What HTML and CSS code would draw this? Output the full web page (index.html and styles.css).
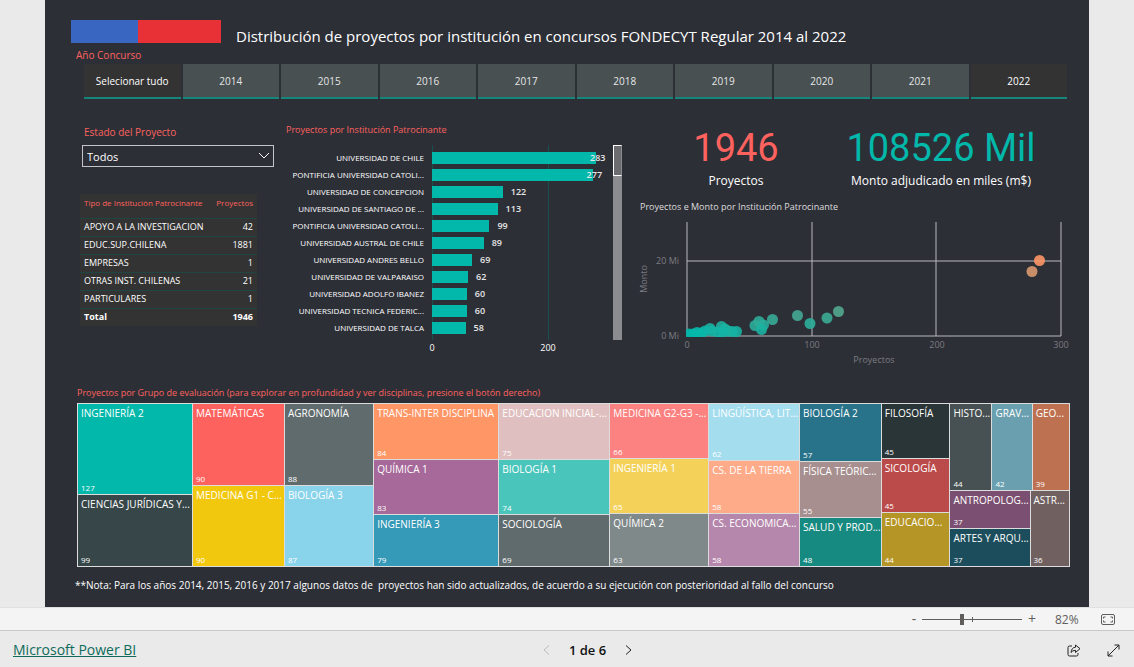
FILE: index.html
```html
<!DOCTYPE html>
<html lang="es">
<head>
<meta charset="utf-8">
<meta name="viewport" content="width=device-width, initial-scale=1">
<title>Proyectos FONDECYT Regular</title>
<link rel="stylesheet" href="styles.css">
</head>
<body>
<main class="viewer">
  <article class="report">
    <header class="report-header">
      <div class="flag"><span class="flag-blue"></span><span class="flag-red"></span></div>
      <h1 class="report-title">Distribución de proyectos por institución en concursos FONDECYT Regular 2014 al 2022</h1>
    </header>

    <h2 class="slicer-title">Año Concurso</h2>
    <nav class="years" aria-label="Año Concurso">
      <button class="year selected">Selecionar tudo</button>
      <button class="year">2014</button>
      <button class="year">2015</button>
      <button class="year">2016</button>
      <button class="year">2017</button>
      <button class="year">2018</button>
      <button class="year">2019</button>
      <button class="year">2020</button>
      <button class="year">2021</button>
      <button class="year selected">2022</button>
    </nav>

    <div class="panels">
      <section class="filters">
        <label class="filter-label" for="estado">Estado del Proyecto</label>
        <div class="select-box">
          <select id="estado" class="select"><option>Todos</option></select>
          <svg class="select-arrow" viewBox="0 0 12 8" aria-hidden="true"><path d="M1 1l5 5 5-5"/></svg>
        </div>
        <table class="types">
          <thead><tr><th>Tipo de Institución Patrocinante</th><th>Proyectos</th></tr></thead>
          <tbody>
            <tr><td>APOYO A LA INVESTIGACION</td><td>42</td></tr>
            <tr><td>EDUC.SUP.CHILENA</td><td>1881</td></tr>
            <tr><td>EMPRESAS</td><td>1</td></tr>
            <tr><td>OTRAS INST. CHILENAS</td><td>21</td></tr>
            <tr><td>PARTICULARES</td><td>1</td></tr>
          </tbody>
          <tfoot><tr><td>Total</td><td>1946</td></tr></tfoot>
        </table>
      </section>

      <section class="institutions">
        <h2 class="chart-title">Proyectos por Institución Patrocinante</h2>
        <div class="bars-frame">
          <div class="bars-main">
            <ul class="bars">
              <li><span class="name">UNIVERSIDAD DE CHILE</span><span class="plot"><i class="bar" style="width:94.3%"></i><b class="inside">283</b></span></li>
              <li><span class="name">PONTIFICIA UNIVERSIDAD CATOLI...</span><span class="plot"><i class="bar" style="width:92.3%"></i><b class="inside">277</b></span></li>
              <li><span class="name">UNIVERSIDAD DE CONCEPCION</span><span class="plot"><i class="bar" style="width:40.7%"></i><b>122</b></span></li>
              <li><span class="name">UNIVERSIDAD DE SANTIAGO DE ...</span><span class="plot"><i class="bar" style="width:37.7%"></i><b>113</b></span></li>
              <li><span class="name">PONTIFICIA UNIVERSIDAD CATOLI...</span><span class="plot"><i class="bar" style="width:33%"></i><b>99</b></span></li>
              <li><span class="name">UNIVERSIDAD AUSTRAL DE CHILE</span><span class="plot"><i class="bar" style="width:29.7%"></i><b>89</b></span></li>
              <li><span class="name">UNIVERSIDAD ANDRES BELLO</span><span class="plot"><i class="bar" style="width:23%"></i><b>69</b></span></li>
              <li><span class="name">UNIVERSIDAD DE VALPARAISO</span><span class="plot"><i class="bar" style="width:20.7%"></i><b>62</b></span></li>
              <li><span class="name">UNIVERSIDAD ADOLFO IBANEZ</span><span class="plot"><i class="bar" style="width:20%"></i><b>60</b></span></li>
              <li><span class="name">UNIVERSIDAD TECNICA FEDERIC...</span><span class="plot"><i class="bar" style="width:20%"></i><b>60</b></span></li>
              <li><span class="name">UNIVERSIDAD DE TALCA</span><span class="plot"><i class="bar" style="width:19.3%"></i><b>58</b></span></li>
            </ul>
            <div class="axis"><span>0</span><span>200</span></div>
          </div>
          <div class="scroll"><div class="scroll-thumb"></div></div>
        </div>
      </section>

      <section class="summary">
        <div class="kpis">
          <div class="kpi"><strong class="kpi-value kpi-red">1946</strong><span class="kpi-label">Proyectos</span></div>
          <div class="kpi"><strong class="kpi-value kpi-teal">108526 Mil</strong><span class="kpi-label">Monto adjudicado en miles (m$)</span></div>
        </div>
        <h2 class="chart-title light">Proyectos e Monto por Institución Patrocinante</h2>
        <svg class="scatter" viewBox="0 0 430 150" role="img" aria-label="Proyectos e Monto">
          <defs><clipPath id="plot"><rect x="46" y="0" width="384" height="121"/></clipPath></defs>
          <g class="grid"><path d="M47 6V120M172 6V120M296 6V120M421 6V120M47 45H421M47 120H421"/></g>
          <g clip-path="url(#plot)" class="dots">
            <circle cx="399.5" cy="44.5" r="5.5" fill="#fe9666"/>
            <circle cx="392" cy="55.5" r="5.5" fill="#d8996f"/>
            <circle cx="198.5" cy="95.5" r="5.5" fill="#52a78f"/>
            <circle cx="187" cy="102" r="5.5" fill="#3bab94"/>
            <circle cx="170" cy="107.5" r="5.5" fill="#2caf9b"/>
            <circle cx="157.5" cy="99.5" r="5.5" fill="#45a993"/>
            <circle cx="132.5" cy="103.5" r="5.5" fill="#37ab97"/>
            <circle cx="115" cy="109.5" r="5.5" fill="#2bad9b"/>
            <circle cx="119" cy="105.5" r="5.5" fill="#2fac98"/>
            <circle cx="123.500" cy="109" r="5.5" fill="#28ae9c"/>
            <circle cx="121.500" cy="113.500" r="5.5" fill="#1bb2a1"/>
            <circle cx="96.500" cy="115.500" r="5.5" fill="#16b3a3"/>
            <circle cx="92" cy="115.500" r="5.5" fill="#16b3a3"/>
            <circle cx="88" cy="115" r="5.5" fill="#18b3a3"/>
            <circle cx="81.500" cy="110.500" r="5.5" fill="#20b09f"/>
            <circle cx="85" cy="113" r="5.5" fill="#1cb2a1"/>
            <circle cx="78" cy="116" r="5.5" fill="#12b5a6"/>
            <circle cx="83" cy="116" r="5.5" fill="#14b4a5"/>
            <circle cx="70" cy="112.500" r="5.5" fill="#1db1a1"/>
            <circle cx="72" cy="115" r="5.5" fill="#16b3a3"/>
            <circle cx="65" cy="115" r="5.5" fill="#10b6a8"/>
            <circle cx="61" cy="117" r="5.5" fill="#0cb7a9"/>
            <circle cx="57" cy="116.500" r="5.5" fill="#08b8ab"/>
            <circle cx="53" cy="118" r="5.5" fill="#04b8ac"/>
            <circle cx="49" cy="118" r="5.5" fill="#01b8aa"/>
          </g>
          <g class="ticks">
            <text x="39" y="48" text-anchor="end">20 Mi</text>
            <text x="39" y="123" text-anchor="end">0 Mi</text>
            <text x="47" y="132" text-anchor="middle">0</text>
            <text x="172" y="132" text-anchor="middle">100</text>
            <text x="297" y="132" text-anchor="middle">200</text>
            <text x="421" y="132" text-anchor="middle">300</text>
            <text x="234" y="147" text-anchor="middle">Proyectos</text>
            <text transform="translate(7 63) rotate(-90)" text-anchor="middle">Monto</text>
          </g>
        </svg>
      </section>
    </div>

    <section class="groups">
      <h2 class="chart-title">Proyectos por Grupo de evaluación (para explorar en profundidad y ver disciplinas, presione el botón derecho)</h2>
      <div class="treemap">
        <div class="col" style="--n:226">
          <div class="cell ing2" style="--n:127"><span>INGENIERÍA 2</span><small>127</small></div>
          <div class="cell jur" style="--n:99"><span>CIENCIAS JURÍDICAS Y...</span><small>99</small></div>
        </div>
        <div class="col" style="--n:180">
          <div class="cell mat" style="--n:90"><span>MATEMÁTICAS</span><small>90</small></div>
          <div class="cell med1" style="--n:90"><span>MEDICINA G1 - C...</span><small>90</small></div>
        </div>
        <div class="col" style="--n:175">
          <div class="cell agr" style="--n:88"><span>AGRONOMÍA</span><small>88</small></div>
          <div class="cell bio3" style="--n:87"><span>BIOLOGÍA 3</span><small>87</small></div>
        </div>
        <div class="col" style="--n:246">
          <div class="cell trans" style="--n:84"><span>TRANS-INTER DISCIPLINA</span><small>84</small></div>
          <div class="cell qui1" style="--n:83"><span>QUÍMICA 1</span><small>83</small></div>
          <div class="cell ing3" style="--n:79"><span>INGENIERÍA 3</span><small>79</small></div>
        </div>
        <div class="col" style="--n:218">
          <div class="cell eduini" style="--n:75"><span>EDUCACION INICIAL-...</span><small>75</small></div>
          <div class="cell bio1" style="--n:74"><span>BIOLOGÍA 1</span><small>74</small></div>
          <div class="cell soc" style="--n:69"><span>SOCIOLOGÍA</span><small>69</small></div>
        </div>
        <div class="col" style="--n:194">
          <div class="cell med2" style="--n:66"><span>MEDICINA G2-G3 -...</span><small>66</small></div>
          <div class="cell ing1" style="--n:65"><span>INGENIERÍA 1</span><small>65</small></div>
          <div class="cell qui2" style="--n:63"><span>QUÍMICA 2</span><small>63</small></div>
        </div>
        <div class="col" style="--n:178">
          <div class="cell lin" style="--n:62"><span>LINGÜÍSTICA, LIT...</span><small>62</small></div>
          <div class="cell tierra" style="--n:58"><span>CS. DE LA TIERRA</span><small>58</small></div>
          <div class="cell eco" style="--n:58"><span>CS. ECONOMICA...</span><small>58</small></div>
        </div>
        <div class="col" style="--n:160">
          <div class="cell bio2" style="--n:57"><span>BIOLOGÍA 2</span><small>57</small></div>
          <div class="cell fis" style="--n:55"><span>FÍSICA TEÓRIC...</span><small>55</small></div>
          <div class="cell salud" style="--n:48"><span>SALUD Y PROD...</span><small>48</small></div>
        </div>
        <div class="col" style="--n:134">
          <div class="cell fil" style="--n:45"><span>FILOSOFÍA</span><small>45</small></div>
          <div class="cell sic" style="--n:45"><span>SICOLOGÍA</span><small>45</small></div>
          <div class="cell edu" style="--n:44"><span>EDUCACIO...</span><small>44</small></div>
        </div>
        <div class="col" style="--n:235">
          <div class="row" style="--n:125">
            <div class="cell his" style="--n:44"><span>HISTO...</span><small>44</small></div>
            <div class="cell grav" style="--n:42"><span>GRAV...</span><small>42</small></div>
            <div class="cell geo" style="--n:39"><span>GEO...</span><small>39</small></div>
          </div>
          <div class="row" style="--n:110">
            <div class="col" style="--n:74">
              <div class="cell ant" style="--n:37"><span>ANTROPOLOG...</span><small>37</small></div>
              <div class="cell art" style="--n:37"><span>ARTES Y ARQU...</span><small>37</small></div>
            </div>
            <div class="cell ast" style="--n:36"><span>ASTR...</span><small>36</small></div>
          </div>
        </div>
      </div>
    </section>
    <p class="note">**Nota: Para los años 2014, 2015, 2016 y 2017 algunos datos de &nbsp;proyectos han sido actualizados, de acuerdo a su ejecución con posterioridad al fallo del concurso</p>
  </article>
</main>

<div class="zoombar">
  <button class="zoom-btn" aria-label="Alejar">-</button>
  <div class="zoom-track"><input class="zoom-range" type="range" min="0" max="100" value="40" aria-label="Zoom"></div>
  <button class="zoom-btn" aria-label="Acercar">+</button>
  <span class="zoom-value">82%</span>
  <button class="icon-btn" aria-label="Ajustar a la página">
    <svg width="14" height="11" viewBox="0 0 14 11"><rect x=".5" y=".5" width="13" height="10" rx="1.500"/><path d="M4.500 3h-2v1.500M2.500 6.500V8h2M9.500 3h2v1.500M11.500 6.500V8h-2"/></svg>
  </button>
</div>

<footer class="footer">
  <a class="brand" href="#">Microsoft Power BI</a>
  <div class="pager">
    <button class="icon-btn off" aria-label="Página anterior"><svg width="7" height="10" viewBox="0 0 7 10"><path d="M6 .5L1 5l5 4.500"/></svg></button>
    <span class="page">1 de 6</span>
    <button class="icon-btn dark" aria-label="Página siguiente"><svg width="7" height="10" viewBox="0 0 7 10"><path d="M1 .5L6 5 1 9.500"/></svg></button>
  </div>
  <div class="actions">
    <button class="icon-btn dark" aria-label="Compartir"><svg width="14" height="13" viewBox="0 0 14 13"><path d="M5 2H2.500Q1 2 1 3.500v7Q1 12 2.500 12h7q1.500 0 1.500-1.500V9M8.500 1l4.500 3.700-4.500 3.800V6.300Q5.500 6.200 4 8.500 4.500 3.500 8.500 3.200z"/></svg></button>
    <button class="icon-btn dark" aria-label="Pantalla completa"><svg width="13" height="13" viewBox="0 0 13 13"><path d="M1 12L12 1M7.500 1H12v4.500M1 7.500V12h4.500"/></svg></button>
  </div>
</footer>
</body>
</html>
```

FILE: styles.css
```css
* { box-sizing: border-box; }
body {
  margin: 0;
  min-height: 100vh;
  display: flex;
  flex-direction: column;
  background: #eaeaea;
  font-family: "Open Sans", "Noto Sans", sans-serif;
  font-size: 11px;
}
h1, h2, p, ul { margin: 0; padding: 0; font-weight: 400; }
button { border: 0; padding: 0; background: none; font: inherit; color: inherit; cursor: pointer; }

.viewer { flex: 1; padding: 0 45px; }
.report { background: #2d2f37; color: #fff; padding: 20px 19px 13px 26px; }

.report-header { display: flex; gap: 15px; height: 28px; }
.flag { display: flex; width: 150px; height: 23px; }
.flag-blue { flex: 4; background: #3866c0; }
.flag-red { flex: 5; background: #e73137; }
.report-title { padding-top: 5px; font-size: 15px; line-height: 23px; white-space: nowrap; }

.slicer-title { padding-left: 5px; font-size: 10px; line-height: 14px; color: #fd625e; }
.years { display: flex; gap: 2px; margin: 2px 3px 0 13px; }
.year {
  flex: 1 1 0;
  height: 35px;
  background: #485052;
  border-bottom: 2px solid #16857b;
  color: #e6e6e6;
  font-size: 10px;
  white-space: nowrap;
}
.year.selected { background: #333; color: #fff; }

.panels {
  display: grid;
  grid-template-columns: 194px 336px 1fr;
  column-gap: 12px;
  margin-top: 23px;
  padding-left: 9px;
}
.filter-label { display: block; padding-left: 4px; font-size: 10px; line-height: 20px; color: #fd625e; }
.select-box { position: relative; margin: 3px 0 0 2px; }
.select {
  display: block;
  width: 100%;
  height: 22px;
  padding: 0 4px;
  appearance: none;
  background: transparent;
  border: 1px solid #c4c5c8;
  border-radius: 0;
  color: #fff;
  font: inherit;
}
.select-arrow { position: absolute; right: 4px; top: 7px; width: 12px; height: 8px; fill: none; stroke: #fff; pointer-events: none; }

.types { width: 177px; margin-top: 27px; border-collapse: collapse; background: #333; font-size: 9px; line-height: 12px; white-space: nowrap; }
.types th, .types td { height: 18px; padding: 0 4px; text-align: left; }
.types th { height: 24px; padding-bottom: 6px; font-weight: 400; font-size: 8px; color: #fd625e; }
.types td { border-top: 1px solid #1f4643; }
.types tfoot td { font-weight: 700; }
.types th:last-child, .types td:last-child { text-align: right; }

.chart-title { font-size: 9px; line-height: 16px; color: #fd625e; white-space: nowrap; }
.chart-title.light { color: #ddd; }
.bars-frame { display: flex; justify-content: space-between; margin-top: 7px; }
.bars-main { width: 320px; }
.bars {
  height: 195px;
  padding-top: 4px;
  list-style: none;
  background:
    linear-gradient(#17504e, #17504e) 146px 0 / 1px 100% no-repeat,
    linear-gradient(#17504e, #17504e) 262px 0 / 1px 100% no-repeat;
}
.bars li { display: flex; align-items: center; height: 17px; }
.name { width: 138px; margin-right: 8px; text-align: right; font-size: 8px; white-space: nowrap; }
.plot { display: flex; align-items: center; flex: 1; }
.bar { height: 12px; background: #01b8aa; flex: none; }
.plot b { padding-left: 8px; font-size: 9px; line-height: 12px; font-weight: 600; color: #e6e6e6; }
.plot b.inside { margin-left: -6px; padding: 0; }
.axis { display: grid; grid-template-columns: 116px 116px; margin-left: 88px; font-size: 9px; line-height: 16px; text-align: center; }
.scroll { width: 9px; height: 195px; background: #8c8c90; }
.scroll-thumb { height: 31px; background: #6c6c70; border: 1px solid #fff; border-right-color: #8c8c90; }

.summary { padding-left: 6px; }
.kpis { display: grid; grid-template-columns: 192px 1fr; padding: 5px 20px 9px 0; text-align: center; }
.kpi { display: flex; flex-direction: column; gap: 5px; }
.kpi-value { font-family: Roboto, sans-serif; font-size: 38px; line-height: 42px; height: 40px; font-weight: 400; white-space: nowrap; }
.kpi-red { color: #fd625e; }
.kpi-teal { color: #01b8aa; }
.kpi-label { font-size: 12px; line-height: 18px; white-space: nowrap; }
.scatter { display: block; width: 100%; margin-top: 1px; overflow: visible; }
.grid path { fill: none; stroke: #b9babd; }
.dots { fill-opacity: .9; }
.ticks text { fill: #7b7c80; font-size: 9px; }

.groups { margin-top: 19px; padding-left: 6px; }
.treemap { display: flex; gap: 1px; height: 164px; margin-top: 2px; padding: 1px; background: #dcdcdc; }
.col, .row { display: flex; gap: 1px; flex: var(--n) 1 0; min-width: 0; min-height: 0; }
.col { flex-direction: column; }
.cell {
  display: flex;
  flex-direction: column;
  justify-content: space-between;
  flex: var(--n) 1 0;
  min-width: 0;
  min-height: 0;
  font-size: 10px;
  line-height: 13px;
  white-space: nowrap;
}
.cell span { padding: 3px 0 0 3px; }
.cell small { padding: 0 0 1px 3px; font-size: 8px; line-height: 10px; }
.ing2 { background: #01b8aa; }
.jur { background: #374649; }
.mat { background: #fd625e; }
.med1 { background: #f2c80f; }
.agr { background: #5f6b6d; }
.bio3 { background: #8ad4eb; }
.trans { background: #fe9666; }
.qui1 { background: #a66999; }
.ing3 { background: #3599b8; }
.eduini { background: #dfbfbf; }
.bio1 { background: #4ac5bb; }
.soc { background: #5f6b6d; }
.med2 { background: #fb8281; }
.ing1 { background: #f4d25a; }
.qui2 { background: #7f898a; }
.lin { background: #a4ddee; }
.tierra { background: #fdab89; }
.eco { background: #b687ac; }
.bio2 { background: #28738a; }
.fis { background: #a78f8f; }
.salud { background: #168980; }
.fil { background: #293537; }
.sic { background: #bb4a4a; }
.edu { background: #b59525; }
.his { background: #475052; }
.grav { background: #6a9fb0; }
.geo { background: #bd7150; }
.ant { background: #7b4f71; }
.art { background: #1b4d5c; }
.ast { background: #706060; }

.note { margin-top: 9px; padding-left: 4px; font-size: 10px; line-height: 18px; white-space: nowrap; }

.zoombar {
  display: flex;
  align-items: center;
  justify-content: flex-end;
  height: 24px;
  padding-right: 19px;
  background: #f4f4f4;
  border-top: 1px solid #e0e0e0;
  border-bottom: 1px solid #c8c8c8;
  color: #605e5c;
}
.zoom-btn { width: 12px; font-size: 14px; line-height: 20px; }
.zoom-track { position: relative; display: flex; width: 100px; height: 20px; margin: 0 4px 0 2px; }
.zoom-track::after { content: ""; position: absolute; left: 50%; top: 8px; width: 1px; height: 5px; background: #605e5c; }
.zoom-range { width: 100%; margin: 0; appearance: none; background: linear-gradient(#605e5c, #605e5c) center / 100% 1px no-repeat; }
.zoom-range::-webkit-slider-thumb { appearance: none; width: 4px; height: 11px; background: #605e5c; }
.zoom-value { width: 54px; padding-left: 17px; font-size: 12px; }

.icon-btn { display: flex; }
.icon-btn svg { fill: none; stroke: #605e5c; }
.icon-btn.dark svg { stroke: #222; }
.icon-btn.off svg { stroke: #bbb; }
.zoombar .icon-btn { margin-left: 9px; }

.footer { display: grid; grid-template-columns: 1fr auto 1fr; align-items: center; height: 36px; padding: 2px 14px 0 13px; }
.brand { justify-self: start; font-size: 14px; line-height: 20px; color: #0f6a5a; }
.pager { display: flex; align-items: center; gap: 19px; padding-left: 42px; color: #111; }
.page { font-size: 13px; font-weight: 600; }
.actions { display: flex; justify-content: flex-end; gap: 26px; }
```
